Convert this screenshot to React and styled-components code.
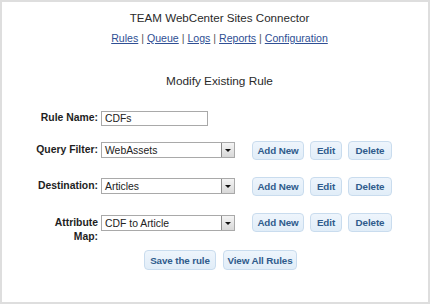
import React from 'react';
import styled, { createGlobalStyle } from 'styled-components';

const GlobalStyle = createGlobalStyle`
  html, body {
    margin: 0;
    padding: 0;
    background: #ffffff;
  }
  body {
    font-family: "Liberation Sans", Arial, sans-serif;
    color: #222;
  }
`;

const Frame = styled.div`
  box-sizing: border-box;
  width: 430px;
  height: 304px;
  border: 2px solid #dedede;
  padding-top: 8px;
  display: flex;
  flex-direction: column;
`;

const Header = styled.header`
  display: flex;
  flex-direction: column;
  align-items: center;
  padding-left: 9px;
`;

const Title = styled.div`
  font-size: 11.6px;
  line-height: 16px;
  color: #2a2a2a;
`;

const Nav = styled.nav`
  margin-top: 5px;
  font-size: 10.6px;
  line-height: 14px;
  color: #555;
`;

const NavLink = styled.a`
  color: #2f4f94;
  text-decoration: underline;
  cursor: pointer;
`;

const Heading = styled.div`
  margin-top: 28px;
  font-size: 11.8px;
  line-height: 16px;
  color: #2a2a2a;
`;

const Form = styled.div`
  display: flex;
  flex-direction: column;
  padding-left: 15px;
`;

const Row = styled.div`
  display: flex;
  align-items: ${(p) => (p.$top ? 'flex-start' : 'center')};
  min-height: 20px;
  margin-top: ${(p) => p.$gap}px;
`;

const Label = styled.label`
  width: 81px;
  text-align: right;
  font-weight: bold;
  font-size: 10.4px;
  line-height: 14px;
  color: #1e1e1e;
  padding-top: ${(p) => (p.$top ? 3 : 0)}px;
`;

const TextInput = styled.div`
  box-sizing: border-box;
  margin-left: 3px;
  width: 107px;
  height: 15px;
  border: 1px solid #a9a9a9;
  background: #fff;
  font-size: 10.4px;
  line-height: 13px;
  padding-left: 3px;
  color: #222;
`;

const Select = styled.div`
  box-sizing: border-box;
  margin-left: 3px;
  margin-top: ${(p) => (p.$top ? 2 : 0)}px;
  width: 134px;
  height: 16px;
  border: 1px solid #a9a9a9;
  background: #fff;
  display: flex;
  align-items: center;
  justify-content: space-between;
  font-size: 10.4px;
  color: #222;
  padding-left: 3px;
`;

const ArrowBox = styled.span`
  box-sizing: border-box;
  width: 13px;
  height: 14px;
  border-left: 1px solid #8a8a8a;
  background: linear-gradient(#f4f4f4, #d8d8d8);
  display: flex;
  align-items: center;
  justify-content: center;
  &::after {
    content: '';
    border-left: 3px solid transparent;
    border-right: 3px solid transparent;
    border-top: 3px solid #111;
    margin-top: 1px;
  }
`;

const Actions = styled.div`
  display: flex;
  gap: ${(p) => p.$gap || 6}px;
  margin-left: ${(p) => p.$left || 0}px;
`;

const Button = styled.button`
  box-sizing: border-box;
  width: ${(p) => p.$w}px;
  height: ${(p) => p.$h || 19}px;
  padding: 0;
  border: 1px solid #c9dcee;
  border-radius: 4px;
  background: linear-gradient(#eef5fc, #e1edf8);
  color: #2f5b8c;
  font-family: "Liberation Sans", Arial, sans-serif;
  font-weight: bold;
  font-size: 9.8px;
  letter-spacing: -0.1px;
  cursor: pointer;
`;

const RowButtons = () => (
  <Actions $left={17}>
    <Button $w={52}>Add New</Button>
    <Button $w={32}>Edit</Button>
    <Button $w={44}>Delete</Button>
  </Actions>
);

const App = () => (
  <>
    <GlobalStyle />
    <Frame>
      <Header>
        <Title>TEAM WebCenter Sites Connector</Title>
        <Nav>
          <NavLink>Rules</NavLink> | <NavLink>Queue</NavLink> | <NavLink>Logs</NavLink> |{' '}
          <NavLink>Reports</NavLink> | <NavLink>Configuration</NavLink>
        </Nav>
        <Heading>Modify Existing Rule</Heading>
      </Header>
      <Form>
        <Row $gap={19}>
          <Label>Rule Name:</Label>
          <TextInput>CDFs</TextInput>
        </Row>
        <Row $gap={12}>
          <Label>Query Filter:</Label>
          <Select>
            WebAssets
            <ArrowBox />
          </Select>
          <RowButtons />
        </Row>
        <Row $gap={16}>
          <Label>Destination:</Label>
          <Select>
            Articles
            <ArrowBox />
          </Select>
          <RowButtons />
        </Row>
        <Row $gap={17} $top>
          <Label $top>
            Attribute
            <br />
            Map:
          </Label>
          <Select $top>
            CDF to Article
            <ArrowBox />
          </Select>
          <RowButtons />
        </Row>
        <Row $gap={6}>
          <Actions $left={127} $gap={7}>
            <Button $w={72} $h={20}>Save the rule</Button>
            <Button $w={74} $h={20}>View All Rules</Button>
          </Actions>
        </Row>
      </Form>
    </Frame>
  </>
);

export default App;
